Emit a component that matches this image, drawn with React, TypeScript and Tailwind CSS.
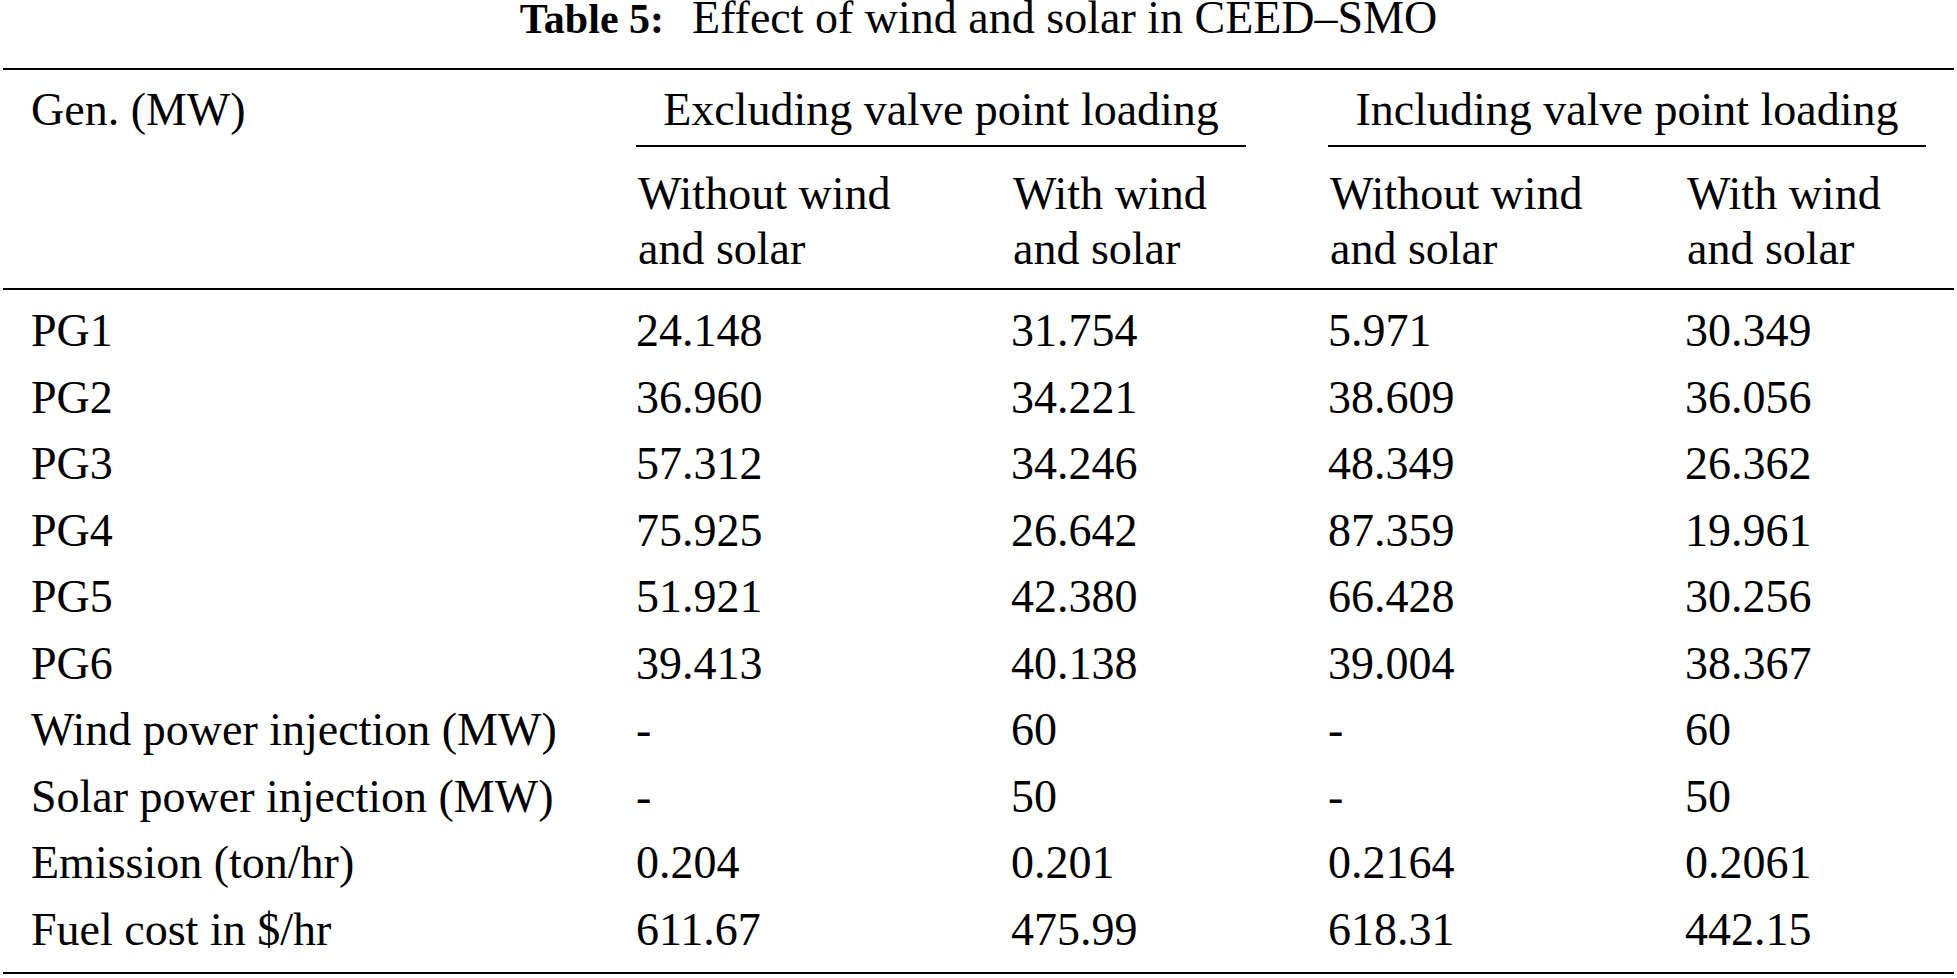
const rows = [
  ['PG1', '24.148', '31.754', '5.971', '30.349'],
  ['PG2', '36.960', '34.221', '38.609', '36.056'],
  ['PG3', '57.312', '34.246', '48.349', '26.362'],
  ['PG4', '75.925', '26.642', '87.359', '19.961'],
  ['PG5', '51.921', '42.380', '66.428', '30.256'],
  ['PG6', '39.413', '40.138', '39.004', '38.367'],
  ['Wind power injection (MW)', '-', '60', '-', '60'],
  ['Solar power injection (MW)', '-', '50', '-', '50'],
  ['Emission (ton/hr)', '0.204', '0.201', '0.2164', '0.2061'],
  ['Fuel cost in $/hr', '611.67', '475.99', '618.31', '442.15'],
];

const cols = 'grid grid-cols-[633px_375px_317px_357px_1fr]';

function SubHead({ first }: { first: string }) {
  return (
    <div className="pl-[2px] pt-[19px] leading-[55px]">
      <span>{first}</span>
      <br />
      <span>and solar</span>
    </div>
  );
}

export default function App() {
  return (
    <div className="min-h-[978px] bg-white px-[3px] text-[46px] text-black [font-family:'Liberation_Serif','Times_New_Roman',serif]">
      <div className="flex items-baseline justify-center leading-[36px]">
        <span className="mr-[28px] text-[42px] font-bold">Table 5:</span>
        <span>Effect of wind and solar in CEED–SMO</span>
      </div>

      <div className="mt-[31px] border-t-2 border-black">
        {/* header */}
        <div className={`${cols} border-b-2 border-black pb-[12px] pt-[12px]`}>
          <div className="row-span-2 pl-[28px] leading-[56px]">
            <span>Gen. (MW)</span>
          </div>
          <div className="col-span-2">
            <div className="mr-[82px] border-b-2 border-black pb-[7px] text-center leading-[56px]">
              <span>Excluding valve point loading</span>
            </div>
          </div>
          <div className="col-span-2">
            <div className="mr-[28px] border-b-2 border-black pb-[7px] text-center leading-[56px]">
              <span>Including valve point loading</span>
            </div>
          </div>
          <SubHead first="Without wind" />
          <SubHead first="With wind" />
          <SubHead first="Without wind" />
          <SubHead first="With wind" />
        </div>

        {/* body */}
        <div className={`${cols} border-b-2 border-black pb-[9px] pt-[8px] leading-[66.5px]`}>
          {rows.map((row) =>
            row.map((cell, i) => (
              <div key={row[0] + i} className={i === 0 ? 'pl-[28px]' : ''}>
                <span>{cell}</span>
              </div>
            )),
          )}
        </div>
      </div>
    </div>
  );
}
